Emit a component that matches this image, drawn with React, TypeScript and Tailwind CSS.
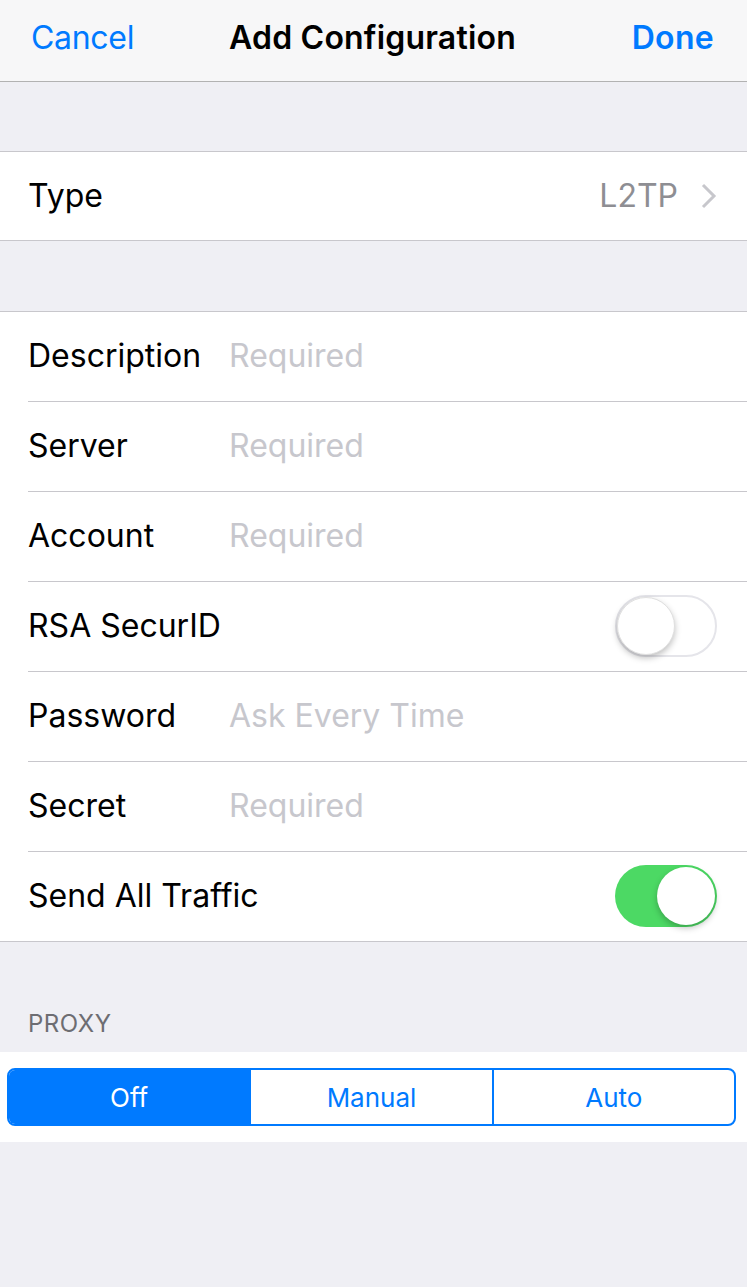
import React from "react"

const font = { fontFamily: "Inter, 'Noto Sans', sans-serif" }

const fields = [
  { label: "Description", placeholder: "Required" },
  { label: "Server", placeholder: "Required" },
  { label: "Account", placeholder: "Required" },
  { label: "RSA SecurID", toggle: false },
  { label: "Password", placeholder: "Ask Every Time" },
  { label: "Secret", placeholder: "Required" },
  { label: "Send All Traffic", toggle: true },
]

function Toggle({ on }: { on: boolean }) {
  return (
    <div
      className={
        on
          ? "relative w-[102px] h-[62px] rounded-full bg-[#4cd964]"
          : "relative w-[102px] h-[62px] rounded-full border-2 border-[#e5e5ea] bg-white"
      }
    >
      <div
        className={
          on
            ? "absolute top-[2px] right-[2px] size-[58px] rounded-full bg-white shadow-[0_3px_6px_rgba(0,0,0,0.25)]"
            : "absolute top-[0px] left-[0px] size-[58px] rounded-full bg-white shadow-[0_3px_6px_rgba(0,0,0,0.25)] border border-[#e0e0e0]"
        }
      />
    </div>
  )
}

export default function App() {
  return (
    <div className="w-[747px] h-[1287px] bg-[#efeff4] text-black" style={font}>
      {/* nav bar */}
      <div className="h-[82px] bg-[#f7f7f8] border-b border-[#b2b2b2] flex items-center px-[31px] pb-[6px]">
        <div className="flex-1">
          <span className="text-[32px] text-[#007aff] tracking-[-0.3px]">Cancel</span>
        </div>
        <span className="text-[32px] font-semibold tracking-[0.2px]">Add Configuration</span>
        <div className="flex-1 flex justify-end pr-[2px]">
          <span className="text-[32px] font-semibold text-[#007aff] tracking-[0.3px]">Done</span>
        </div>
      </div>

      <div className="h-[69px]" />

      <div className="bg-white border-y border-[#c8c7cc] h-[90px] flex items-center pl-[28px] pr-[30px]">
        <span className="text-[32px] flex-1">Type</span>
        <span className="text-[32px] text-[#8e8e93] mr-[23px]">L2TP</span>
        <svg width="16" height="26" viewBox="0 0 16 26">
          <path d="M2 2 L13 13 L2 24" fill="none" stroke="#c7c7cc" strokeWidth="3" />
        </svg>
      </div>

      <div className="h-[70px]" />

      <div className="bg-white border-y border-[#c8c7cc]">
        {fields.map((f, i) => (
          <div key={f.label} className="pl-[28px]">
            <div
              className={
                i < fields.length - 1
                  ? "h-[90px] flex items-center border-b border-[#c8c7cc] pr-[30px] pb-[2px]"
                  : "h-[89px] flex items-center pr-[30px] pb-[2px]"
              }
            >
              <span className="text-[32px] w-[201px] shrink-0 whitespace-nowrap">{f.label}</span>
              {f.placeholder && <span className="text-[32px] text-[#c7c7cd]">{f.placeholder}</span>}
              {f.toggle !== undefined && (
                <div className="ml-auto">
                  <Toggle on={f.toggle} />
                </div>
              )}
            </div>
          </div>
        ))}
      </div>

      <div className="h-[110px] flex items-end pl-[28px] pb-[10px]">
        <span className="text-[24px] text-[#6d6d72] tracking-[0.5px]">PROXY</span>
      </div>

      <div className="bg-white h-[90px] pl-[7px] pr-[11px] flex items-center">
        <div className="flex w-full h-[58px] border-2 border-[#007aff] rounded-[8px] overflow-hidden text-[26px]">
          <div className="flex-1 bg-[#007aff] text-white flex items-center justify-center">Off</div>
          <div className="flex-1 text-[#007aff] flex items-center justify-center border-x-2 border-[#007aff]">Manual</div>
          <div className="flex-1 text-[#007aff] flex items-center justify-center">Auto</div>
        </div>
      </div>
    </div>
  )
}
